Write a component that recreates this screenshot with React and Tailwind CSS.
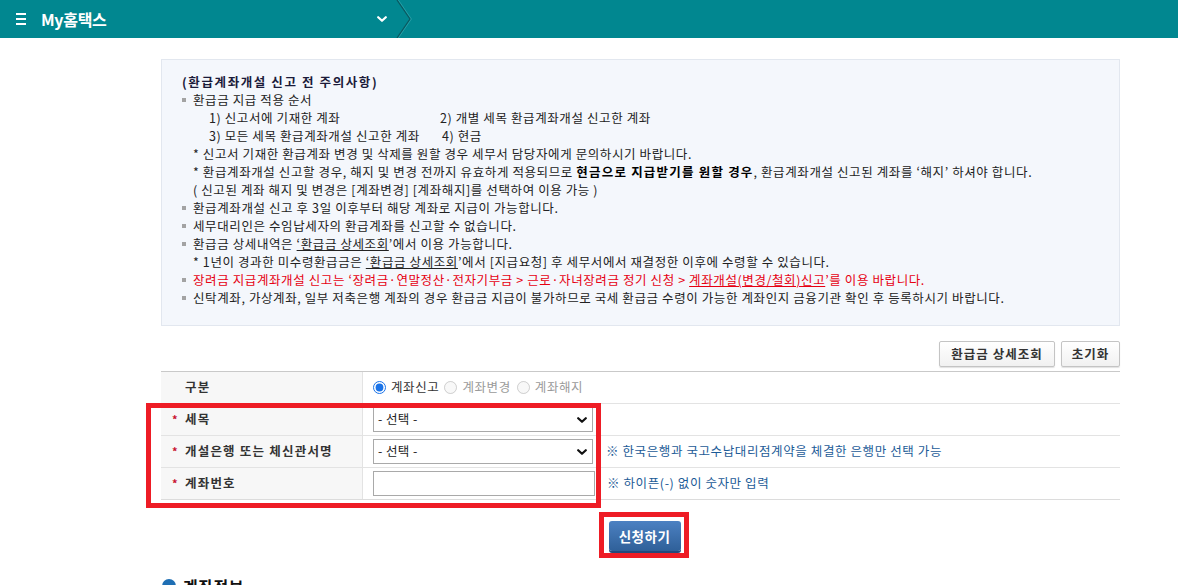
import { useState } from "react";

const font = { fontFamily: '"Malgun Gothic", "Noto Sans CJK KR", "Noto Sans", sans-serif' };

function Bullet() {
  return <span className="inline-block w-[4px] h-[4px] bg-[#a3a3a3] mr-[7px] align-middle mb-[3px]" />;
}

function Chevron({ className }) {
  return (
    <svg viewBox="0 0 10 6" className={className} fill="none" stroke="currentColor" strokeWidth="2.2" strokeLinecap="round" strokeLinejoin="round">
      <path d="M1.2 1.2 5 4.8 8.8 1.2" />
    </svg>
  );
}

function Header() {
  return (
    <header className="relative h-[38px] bg-[#018790] flex items-center text-white">
      <div className="flex flex-col gap-[3px] ml-[16px] w-[10px]">
        <span className="h-[2px] bg-white" />
        <span className="h-[2px] bg-white" />
        <span className="h-[2px] bg-white" />
      </div>
      <span className="ml-[15px] text-[16px] font-bold tracking-[-0.3px]">My홈택스</span>
      <Chevron className="ml-[270px] w-[10px] h-[6px] text-white" />
      <svg viewBox="0 0 16 38" className="absolute left-[396px] top-0 w-[16px] h-[38px]" fill="none">
        <path d="M1 0 14 19 1 38" stroke="#0b5960" strokeWidth="1.3" />
        <path d="M2.4 0 15.4 19 2.4 38" stroke="#2fa4ac" strokeWidth="0.8" />
      </svg>
    </header>
  );
}

function Notice() {
  return (
    <div className="border border-[#e2e7ef] bg-[#f4f7fc] pl-[20px] pt-[13px] pb-[18px] text-[12.5px] tracking-[0.6px] leading-[18px] text-[#222]">
      <div className="font-bold text-[#1b1b3a] tracking-[1.6px]">(환급계좌개설 신고 전 주의사항)</div>
      <div><Bullet />환급금 지급 적용 순서</div>
      <div className="pl-[27px] flex">
        <span className="w-[231px]">1) 신고서에 기재한 계좌</span>
        <span>2) 개별 세목 환급계좌개설 신고한 계좌</span>
      </div>
      <div className="pl-[27px] flex">
        <span className="w-[233px]">3) 모든 세목 환급계좌개설 신고한 계좌</span>
        <span>4) 현금</span>
      </div>
      <div className="pl-[11px]">* 신고서 기재한 환급계좌 변경 및 삭제를 원할 경우 세무서 담당자에게 문의하시기 바랍니다.</div>
      <div className="pl-[11px]">
        * 환급계좌개설 신고할 경우, 해지 및 변경 전까지 유효하게 적용되므로 <b className="text-black tracking-[1.2px]">현금으로 지급받기를 원할 경우</b>, 환급계좌개설 신고된 계좌를 ‘해지’ 하셔야 합니다.
      </div>
      <div className="pl-[11px]">( 신고된 계좌 해지 및 변경은 [계좌변경] [계좌해지]를 선택하여 이용 가능 )</div>
      <div><Bullet />환급계좌개설 신고 후 3일 이후부터 해당 계좌로 지급이 가능합니다.</div>
      <div><Bullet />세무대리인은 수임납세자의 환급계좌를 신고할 수 없습니다.</div>
      <div><Bullet />환급금 상세내역은 <span className="underline">‘환급금 상세조회</span>’에서 이용 가능합니다.</div>
      <div className="pl-[11px]">
        * 1년이 경과한 미수령환급금은 <span className="underline">‘환급금 상세조회</span>’에서 [지급요청] 후 세무서에서 재결정한 이후에 수령할 수 있습니다.
      </div>
      <div className="text-[#e60012]">
        <Bullet />장려금 지급계좌개설 신고는 ‘장려금·연말정산·전자기부금 &gt; 근로·자녀장려금 정기 신청 &gt; <span className="underline">계좌개설(변경/철회)신고</span>’를 이용 바랍니다.
      </div>
      <div><Bullet />신탁계좌, 가상계좌, 일부 저축은행 계좌의 경우 환급금 지급이 불가하므로 국세 환급금 수령이 가능한 계좌인지 금융기관 확인 후 등록하시기 바랍니다.</div>
    </div>
  );
}

function GrayButton({ children, className }) {
  return (
    <button className={`h-[26px] rounded-[2px] border border-[#c4c4c4] bg-gradient-to-b from-white to-[#f1f1f1] shadow-[0_1px_1px_rgba(0,0,0,0.12)] text-[12.5px] font-bold text-[#333] tracking-[1px] ${className}`}>
      {children}
    </button>
  );
}

function Label({ children, required }) {
  return (
    <div className="bg-[#f7f7f7] border-r border-[#e3e3e3] flex items-center pl-[11px] text-[12.5px] font-bold text-[#333] tracking-[1.2px]">
      <span className="w-[13px] text-[#c8102e] text-[11px]">{required ? "*" : ""}</span>
      {children}
    </div>
  );
}

function Select() {
  return (
    <div className="relative w-[220px] h-[25px]">
      <select className="appearance-none w-full h-full border border-[#a9a9a9] bg-white pl-[4px] text-[12.5px] tracking-[0.4px] text-[#222] outline-none">
        <option>- 선택 -</option>
      </select>
      <Chevron className="pointer-events-none absolute right-[6px] top-[10px] w-[10px] h-[6px] text-[#111]" />
    </div>
  );
}

function Form() {
  const [kind, setKind] = useState("new");
  return (
    <div className="relative mt-[4px] border-t border-[#c9c9c9] text-[12.5px] tracking-[0.6px]">
      <div className="grid grid-cols-[202px_1fr] h-[32px] border-b border-[#e3e3e3]">
        <Label>구분</Label>
        <div className="flex items-center pl-[10px]">
          <label className="flex items-center text-[#333]">
            <input type="radio" checked={kind === "new"} onChange={() => setKind("new")} className="m-0 w-[13px] h-[13px] accent-[#1a73e8]" />
            <span className="ml-[5px]">계좌신고</span>
          </label>
          <label className="flex items-center text-[#9a9a9a] ml-[5px]">
            <input type="radio" disabled className="m-0 w-[13px] h-[13px]" />
            <span className="ml-[5px]">계좌변경</span>
          </label>
          <label className="flex items-center text-[#9a9a9a] ml-[6px]">
            <input type="radio" disabled className="m-0 w-[13px] h-[13px]" />
            <span className="ml-[5px]">계좌해지</span>
          </label>
        </div>
      </div>
      <div className="grid grid-cols-[202px_1fr] h-[32px] border-b border-[#e3e3e3]">
        <Label required>세목</Label>
        <div className="flex items-center pl-[10px]">
          <Select />
        </div>
      </div>
      <div className="grid grid-cols-[202px_1fr] h-[32px] border-b border-[#e3e3e3]">
        <Label required>개설은행 또는 체신관서명</Label>
        <div className="flex items-center pl-[10px]">
          <Select />
          <span className="ml-[13px] text-[#1c5b97]">※ 한국은행과 국고수납대리점계약을 체결한 은행만 선택 가능</span>
        </div>
      </div>
      <div className="grid grid-cols-[202px_1fr] h-[32px] border-b border-[#dcdcdc]">
        <Label required>계좌번호</Label>
        <div className="flex items-center pl-[10px]">
          <input type="text" className="w-[222px] h-[25px] border border-[#a9a9a9] bg-white outline-none" />
          <span className="ml-[12px] text-[#1c5b97]">※ 하이픈(-) 없이 숫자만 입력</span>
        </div>
      </div>
      <div className="pointer-events-none absolute left-[-15px] top-[31px] w-[455px] h-[105px] border-[5px] border-[#ee1c25]" />
    </div>
  );
}

export default function App() {
  return (
    <div className="min-h-[585px] bg-white overflow-hidden" style={font}>
      <Header />
      <main className="ml-[161px] w-[959px] pt-[21px]">
        <Notice />
        <div className="flex justify-end gap-[6px] mt-[15px]">
          <GrayButton className="w-[116px]">환급금 상세조회</GrayButton>
          <GrayButton className="w-[59px]">초기화</GrayButton>
        </div>
        <Form />
        <div className="flex justify-center mt-[21px] pl-[8px]">
          <div className="relative">
            <button className="w-[72px] h-[30px] rounded-[3px] bg-gradient-to-b from-[#4c81c2] to-[#2f6099] shadow-[0_2px_0_#24487a] text-white text-[13.5px] font-bold tracking-[0.5px]">
              신청하기
            </button>
            <div className="pointer-events-none absolute left-[-10px] top-[-9px] w-[90px] h-[46px] border-[5px] border-[#ee1c25]" />
          </div>
        </div>
        <div className="flex items-center mt-[23px] ml-[1px]">
          <span className="w-[14px] h-[14px] rounded-full bg-[#1f6fb4]" />
          <span className="ml-[7px] text-[16px] font-bold text-[#111] tracking-[0.5px]">계좌정보</span>
        </div>
      </main>
    </div>
  );
}
